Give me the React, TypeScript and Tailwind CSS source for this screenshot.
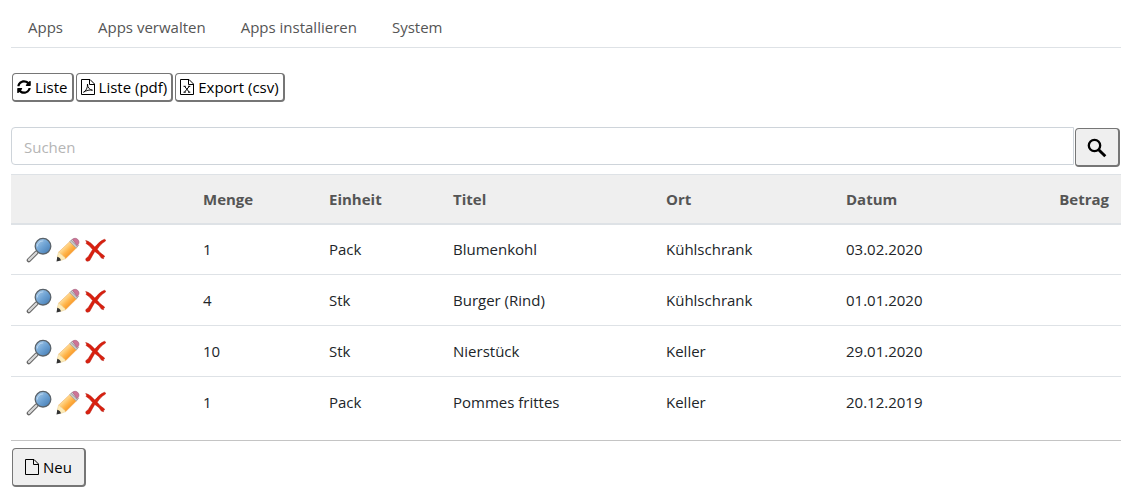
import React, { useState } from 'react';

interface Item {
  id: number;
  menge: number;
  einheit: string;
  titel: string;
  ort: string;
  datum: string;
  betrag?: string;
}

const NAV = ['Apps', 'Apps verwalten', 'Apps installieren', 'System'];

const ITEMS: Item[] = [
  { id: 1, menge: 1, einheit: 'Pack', titel: 'Blumenkohl', ort: 'Kühlschrank', datum: '03.02.2020' },
  { id: 2, menge: 4, einheit: 'Stk', titel: 'Burger (Rind)', ort: 'Kühlschrank', datum: '01.01.2020' },
  { id: 3, menge: 10, einheit: 'Stk', titel: 'Nierstück', ort: 'Keller', datum: '29.01.2020' },
  { id: 4, menge: 1, einheit: 'Pack', titel: 'Pommes frittes', ort: 'Keller', datum: '20.12.2019' },
];

const RefreshIcon = () => (
  <svg width="14" height="14" viewBox="0 0 512 512" fill="currentColor" aria-hidden="true">
    <path d="M370.7 133.3C339.5 104 298.900 88 255.800 88c-77.500.1-144.300 53.200-162.800 126.900-1.300 5.400-6.100 9.200-11.700 9.200H24.100c-7.500 0-13.200-6.800-11.800-14.200C33.900 94.900 134.800 8 256 8c66.400 0 126.800 26.100 171.300 68.700L463 41C478.100 25.900 504 36.600 504 57.900V192c0 13.300-10.700 24-24 24H345.900c-21.400 0-32.100-25.900-17-41l41.800-41.700zM32 296h134.100c21.400 0 32.100 25.900 17 41l-41.800 41.800c31.300 29.300 71.800 45.300 114.900 45.300 77.400-.1 144.300-53.100 162.800-126.800 1.300-5.400 6.100-9.200 11.700-9.200h57.300c7.500 0 13.200 6.800 11.800 14.200C478.100 417.100 377.200 504 256 504c-66.400 0-126.800-26.100-171.300-68.700L49 471c-15.100 15.100-41 4.400-41-16.900V320c0-13.300 10.700-24 24-24z" />
  </svg>
);

const SearchIcon = () => (
  <svg width="20" height="20" viewBox="0 0 20 20" fill="none" stroke="currentColor" aria-hidden="true">
    <circle cx="7.500" cy="7.500" r="5.700" strokeWidth="2.300" />
    <path d="m11.700 11.700 6.600 6.600" strokeWidth="2.900" />
  </svg>
);

const FileIcon = ({ children }: { children?: React.ReactNode }) => (
  <svg width="14" height="16" viewBox="0 0 14 16" fill="none" stroke="currentColor" strokeWidth="1" aria-hidden="true">
    <path d="M.5.5h8.500l4.500 4.500v10.500H.5z" strokeLinejoin="round" />
    <path d="M8.500.5v5h5" />
    {children}
  </svg>
);

const LensIcon = () => (
  <svg width="26" height="26" viewBox="0 0 26 26" aria-hidden="true">
    <defs>
      <linearGradient id="lens" x1="0" y1="0" x2="1" y2="1">
        <stop offset="0" stopColor="#b3d3ee" />
        <stop offset=".5" stopColor="#6fa3d4" />
        <stop offset="1" stopColor="#3f77b0" />
      </linearGradient>
    </defs>
    <path d="M2.800 23.200 10.500 15.600" stroke="#666" strokeWidth="4.200" strokeLinecap="round" />
    <path d="M3 22.900 10.500 15.500" stroke="#d8d8d8" strokeWidth="2.200" strokeLinecap="round" />
    <circle cx="17" cy="9.200" r="7.800" fill="url(#lens)" stroke="#59626a" strokeWidth="1.300" />
    <path d="M11.300 9.500c0-3.200 2.600-5.600 5.900-5.600" fill="none" stroke="#d2e6f6" strokeOpacity=".6" />
  </svg>
);

const PencilIcon = () => (
  <svg width="26" height="26" viewBox="0 0 26 26" aria-hidden="true">
    <defs>
      <linearGradient id="wood" x1=".2" y1=".2" x2=".8" y2=".8">
        <stop offset=".2" stopColor="#ffda92" />
        <stop offset=".55" stopColor="#ffb347" />
        <stop offset="1" stopColor="#f48c1c" />
      </linearGradient>
    </defs>
    <path d="M14.800 4.600 21.300 11 10.500 21.800 3.600 15.200z" fill="url(#wood)" stroke="#efa550" strokeWidth=".5" />
    <path d="M3.600 15c1 .3 1.800 1 2 2.200 1.300.1 2.100.8 2.300 2 1.300.2 2.200 1.100 2.400 2.600L5.800 23.400 2.200 20z" fill="#fdebb8" stroke="#e8cf95" strokeWidth=".5" />
    <path d="M2.300 19.800c1.800.3 3.300 1.600 3.600 3.600l-4.400 1.100z" fill="#333" />
    <path d="m14.800 4.500 2.500-2.300 6.300 6.300-2.400 2.400z" fill="#d6d6d6" stroke="#858585" strokeWidth=".6" />
    <path d="m16.200 3.500 6.200 6.200" stroke="#777" strokeWidth=".7" />
    <path d="M17.500 2.300c1.600-1.500 3.900-1.200 5.300.2s1.600 3.600.1 5.200l-.8.800z" fill="#ce7496" stroke="#a8627f" strokeWidth=".7" />
  </svg>
);

const CrossIcon = () => (
  <svg width="24" height="26" viewBox="0 0 24 26" fill="#d9200f" stroke="#b5170b" strokeWidth=".5" aria-hidden="true">
    <path d="M1.700 3.500 4 4.300 7 6.200l3.800 3.900C14 6.700 16.500 3.600 20.500 2.300l1.200.8-.5 1.200c-3.200 1.500-5.700 4.700-8 8l2.800 3.300 4.300 3.200.2 1.100-1.100.4.200 1.400-2.200-.6-2.300-3.300-4.300-3.400-2.300 4-2.800 5.100-2 .8-1.600-.5-.4-2 2.600-2.300 4.300-7L5.300 8.800 1.900 6.300l.8-1z" />
  </svg>
);

const buttonClass =
  'flex items-center rounded border border-r-2 border-b-2 border-[#767676] text-black';

export default function App() {
  const [query, setQuery] = useState('');
  const rows = ITEMS.filter((item) => item.titel.toLowerCase().includes(query.toLowerCase()));

  return (
    <div className="bg-white pt-2 pr-1 pb-2 pl-[11px] font-['Open_Sans','Noto_Sans',sans-serif] text-[15px] leading-6 text-[#212529]">
      <nav className="flex h-10 items-center gap-[35px] border-b border-[#dee2e6] px-[17px] pb-0.5 text-[#555]">
        {NAV.map((label) => (
          <a key={label} href="#">{label}</a>
        ))}
      </nav>

      <div className="mt-[25px] ml-px flex gap-0.5">
        <button type="button" className={`${buttonClass} h-[29px] gap-1 bg-white px-1`}>
          <RefreshIcon />
          Liste
        </button>
        <button type="button" className={`${buttonClass} h-[29px] gap-1 bg-white px-1`}>
          <FileIcon>
            <path d="M2.500 13.200c2.500-1.200 4.300-4.500 4-8.200 0 3.500 2 5.800 5 6.200-3-.6-6 .2-9 2" strokeWidth=".9" />
          </FileIcon>
          Liste (pdf)
        </button>
        <button type="button" className={`${buttonClass} h-[29px] gap-1 bg-white px-1`}>
          <FileIcon>
            <path d="M4.500 7.300 9.300 13.200M9.300 7.300 4.500 13.200M3.500 7.300h2.300M8 7.300h2.300M3.500 13.200h2.300M8 13.200h2.300" />
          </FileIcon>
          Export (csv)
        </button>
      </div>

      <form className="mt-[25px] flex gap-px pr-px" onSubmit={(e) => e.preventDefault()}>
        <input
          type="text"
          aria-label="Suchen"
          placeholder="Suchen"
          value={query}
          onChange={(e) => setQuery(e.target.value)}
          className="h-[38px] min-w-0 flex-1 rounded-l border border-[#ced4da] px-3 pt-0.5 placeholder:text-[#b5b5b5] focus:outline-none"
        />
        <button
          type="submit"
          aria-label="Suche starten"
          className={`${buttonClass} mt-px h-[39px] w-[45px] justify-center bg-[#efefef] pt-0.5`}
        >
          <SearchIcon />
        </button>
      </form>

      <table className="mt-[7px] w-full table-fixed border-collapse text-left">
        <colgroup>
          <col className="w-[180px]" />
          <col className="w-[126px]" />
          <col className="w-[124px]" />
          <col className="w-[213px]" />
          <col className="w-[180px]" />
          <col className="w-[150px]" />
          <col />
        </colgroup>
        <thead>
          <tr className="h-[49px] border-t border-b-2 border-[#dee2e6] bg-[#efefef] text-[#555]">
            <td />
            <th className="px-3">Menge</th>
            <th className="px-3">Einheit</th>
            <th className="px-3">Titel</th>
            <th className="px-3">Ort</th>
            <th className="px-3">Datum</th>
            <th className="px-3 text-right">Betrag</th>
          </tr>
        </thead>
        <tbody>
          {rows.map((item) => (
            <tr key={item.id} className="h-[51px] border-b border-[#dee2e6] last:border-b-0">
              <td className="px-[15px]">
                <div className="flex gap-[3px] pt-0.5">
                  <button type="button" aria-label={`${item.titel} anzeigen`}><LensIcon /></button>
                  <button type="button" aria-label={`${item.titel} bearbeiten`}><PencilIcon /></button>
                  <button type="button" aria-label={`${item.titel} löschen`}><CrossIcon /></button>
                </div>
              </td>
              <td className="px-3">{item.menge}</td>
              <td className="px-3">{item.einheit}</td>
              <td className="px-3">{item.titel}</td>
              <td className="px-3">{item.ort}</td>
              <td className="px-3">{item.datum}</td>
              <td className="px-3 text-right">{item.betrag}</td>
            </tr>
          ))}
        </tbody>
      </table>

      <hr className="mt-3 border-[#c4c4c4]" />
      <button type="button" className={`${buttonClass} mt-[7px] ml-px h-[39px] gap-1 bg-[#efefef] px-3`}>
        <FileIcon />
        Neu
      </button>
    </div>
  );
}
